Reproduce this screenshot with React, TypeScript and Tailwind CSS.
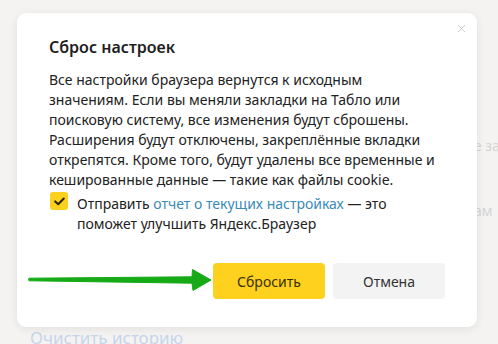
import { X } from "lucide-react";

export default function App() {
  return (
    <div
      className="relative w-[498px] h-[344px] overflow-hidden bg-[#f4f3f2]"
      style={{ fontFamily: '"Noto Sans", "Open Sans", sans-serif' }}
    >
      {/* page behind the dialog */}
      <div className="flex flex-col h-full pl-[30px] text-[14px] text-[#dddddd]">
        <div className="pt-[9px] leading-[20px]">Настройки</div>
        <div className="mt-auto leading-[20px] text-[17px] text-[#c6d6ea] translate-y-[4px]">
          Очистить историю
        </div>
      </div>
      <div className="absolute right-0 top-[135px] flex flex-col gap-[44px] text-[14px] text-[#d4d4d4] pl-[2px] w-[26px] overflow-hidden whitespace-nowrap">
        <span>е за</span>
        <span>ам</span>
      </div>

      {/* dialog */}
      <div className="absolute left-[17px] top-[13px] w-[460px] h-[314px] rounded-[9px] bg-white shadow-[0_2px_10px_rgba(0,0,0,0.08)] px-[32px] pt-[22px] text-[#222]">
        <button className="absolute right-[9px] top-[9px] text-[#c4c4c4]">
          <X size={13} strokeWidth={1.6} />
        </button>
        <h2 className="text-[16px] leading-[24px] font-semibold text-[#1f1f1f]">Сброс настроек</h2>
        <p className="mt-[11px] text-[14px] leading-[20px]">
          Все настройки браузера вернутся к исходным
          <br />
          значениям. Если вы меняли закладки на Табло или
          <br />
          поисковую систему, все изменения будут сброшены.
          <br />
          Расширения будут отключены, закреплённые вкладки
          <br />
          открепятся. Кроме того, будут удалены все временные и
          <br />
          кешированные данные — такие как файлы cookie.
        </p>
        <label className="flex items-start gap-[9px] mt-[4px] text-[14px] leading-[20px]">
          <span className="-mt-[2px] w-[18px] h-[18px] shrink-0 rounded-[3px] bg-[#fcd01f] flex items-center justify-center ml-[1px]">
            <svg width="11" height="9" viewBox="0 0 11 9" fill="none">
              <path d="M1.2 4.4 4.2 7.2 9.8 1.5" stroke="#2a2200" strokeWidth="2" strokeLinecap="round" strokeLinejoin="round" />
            </svg>
          </span>
          <span>
            Отправить <span className="text-[#3a8ab8]">отчет о текущих настройках</span> — это
            <br />
            поможет улучшить Яндекс.Браузер
          </span>
        </label>
        <div className="flex justify-end gap-[8px] mt-[29px]">
          <button className="w-[112px] h-[36px] rounded-[4px] bg-[#fdd11e] text-[14px] text-[#3a2f05]">
            Сбросить
          </button>
          <button className="w-[112px] h-[36px] rounded-[4px] bg-[#f3f3f3] text-[14px] text-[#333]">
            Отмена
          </button>
        </div>
      </div>

      {/* green arrow annotation */}
      <svg className="absolute left-[27px] top-[267px]" width="186" height="26" viewBox="0 0 186 26">
        <path
          d="M2 11.2 Q1 12.5 2 13.8 L165 16.2 L166 23.5 L184 13 L165.5 2.5 L165 9.8 Z"
          fill="#16ab16"
          stroke="#16ab16"
          strokeWidth="1"
          strokeLinejoin="round"
        />
      </svg>
    </div>
  );
}
